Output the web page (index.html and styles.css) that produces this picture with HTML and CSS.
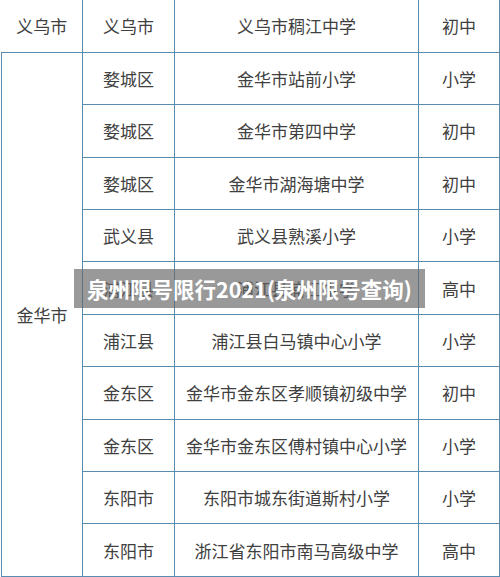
FILE: index.html
```html
<!DOCTYPE html>
<html>
<head>
<meta charset="utf-8">
<link rel="stylesheet" href="styles.css">
</head>
<body>
<div class="page">
<table class="schools">
<colgroup>
<col class="c1"><col class="c2"><col class="c3"><col class="c4">
</colgroup>
<tr class="first"><td class="nl">义乌市</td><td>义乌市</td><td>义乌市稠江中学</td><td>初中</td></tr>
<tr><td rowspan="10">金华市</td><td>婺城区</td><td>金华市站前小学</td><td>小学</td></tr>
<tr><td>婺城区</td><td>金华市第四中学</td><td>初中</td></tr>
<tr><td>婺城区</td><td>金华市湖海塘中学</td><td>初中</td></tr>
<tr><td>武义县</td><td>武义县熟溪小学</td><td>小学</td></tr>
<tr><td>浦江县</td><td>浦江县浦江中学</td><td>高中</td></tr>
<tr><td>浦江县</td><td>浦江县白马镇中心小学</td><td>小学</td></tr>
<tr><td>金东区</td><td>金华市金东区孝顺镇初级中学</td><td>初中</td></tr>
<tr><td>金东区</td><td>金华市金东区傅村镇中心小学</td><td>小学</td></tr>
<tr><td>东阳市</td><td>东阳市城东街道斯村小学</td><td>小学</td></tr>
<tr><td>东阳市</td><td>浙江省东阳市南马高级中学</td><td>高中</td></tr>
</table>
<div class="banner">泉州限号限行2021(泉州限号查询)</div>
</div>
</body>
</html>
```

FILE: styles.css
```css
html, body {
  margin: 0;
  padding: 0;
  background: #ffffff;
}
.page {
  position: relative;
  width: 500px;
  height: 577px;
  overflow: hidden;
}
.schools {
  border-collapse: collapse;
  table-layout: fixed;
  width: 498px;
  margin-left: 1px;
  font-family: "Noto Sans CJK SC", "Noto Sans", sans-serif;
  font-size: 17px;
  color: #404040;
}
.c1 { width: 81px; }
.c2 { width: 92px; }
.c3 { width: 244px; }
.c4 { width: 81px; }
.schools td {
  border: 1.5px solid #5a8cb2;
  text-align: center;
  vertical-align: middle;
  height: 52.4px;
  padding: 0;
  box-sizing: border-box;
}
.schools tr.first td {
  border-top: none;
}
.schools td.nl {
  border-left: none;
}
.banner {
  position: absolute;
  left: 74px;
  top: 269px;
  width: 351px;
  height: 39px;
  background: rgba(100, 100, 100, 0.66);
  color: #ffffff;
  font-family: "Noto Sans CJK SC", "Noto Sans", sans-serif;
  font-weight: 700;
  font-size: 21.5px;
  line-height: 39px;
  text-align: center;
  white-space: nowrap;
}
```
